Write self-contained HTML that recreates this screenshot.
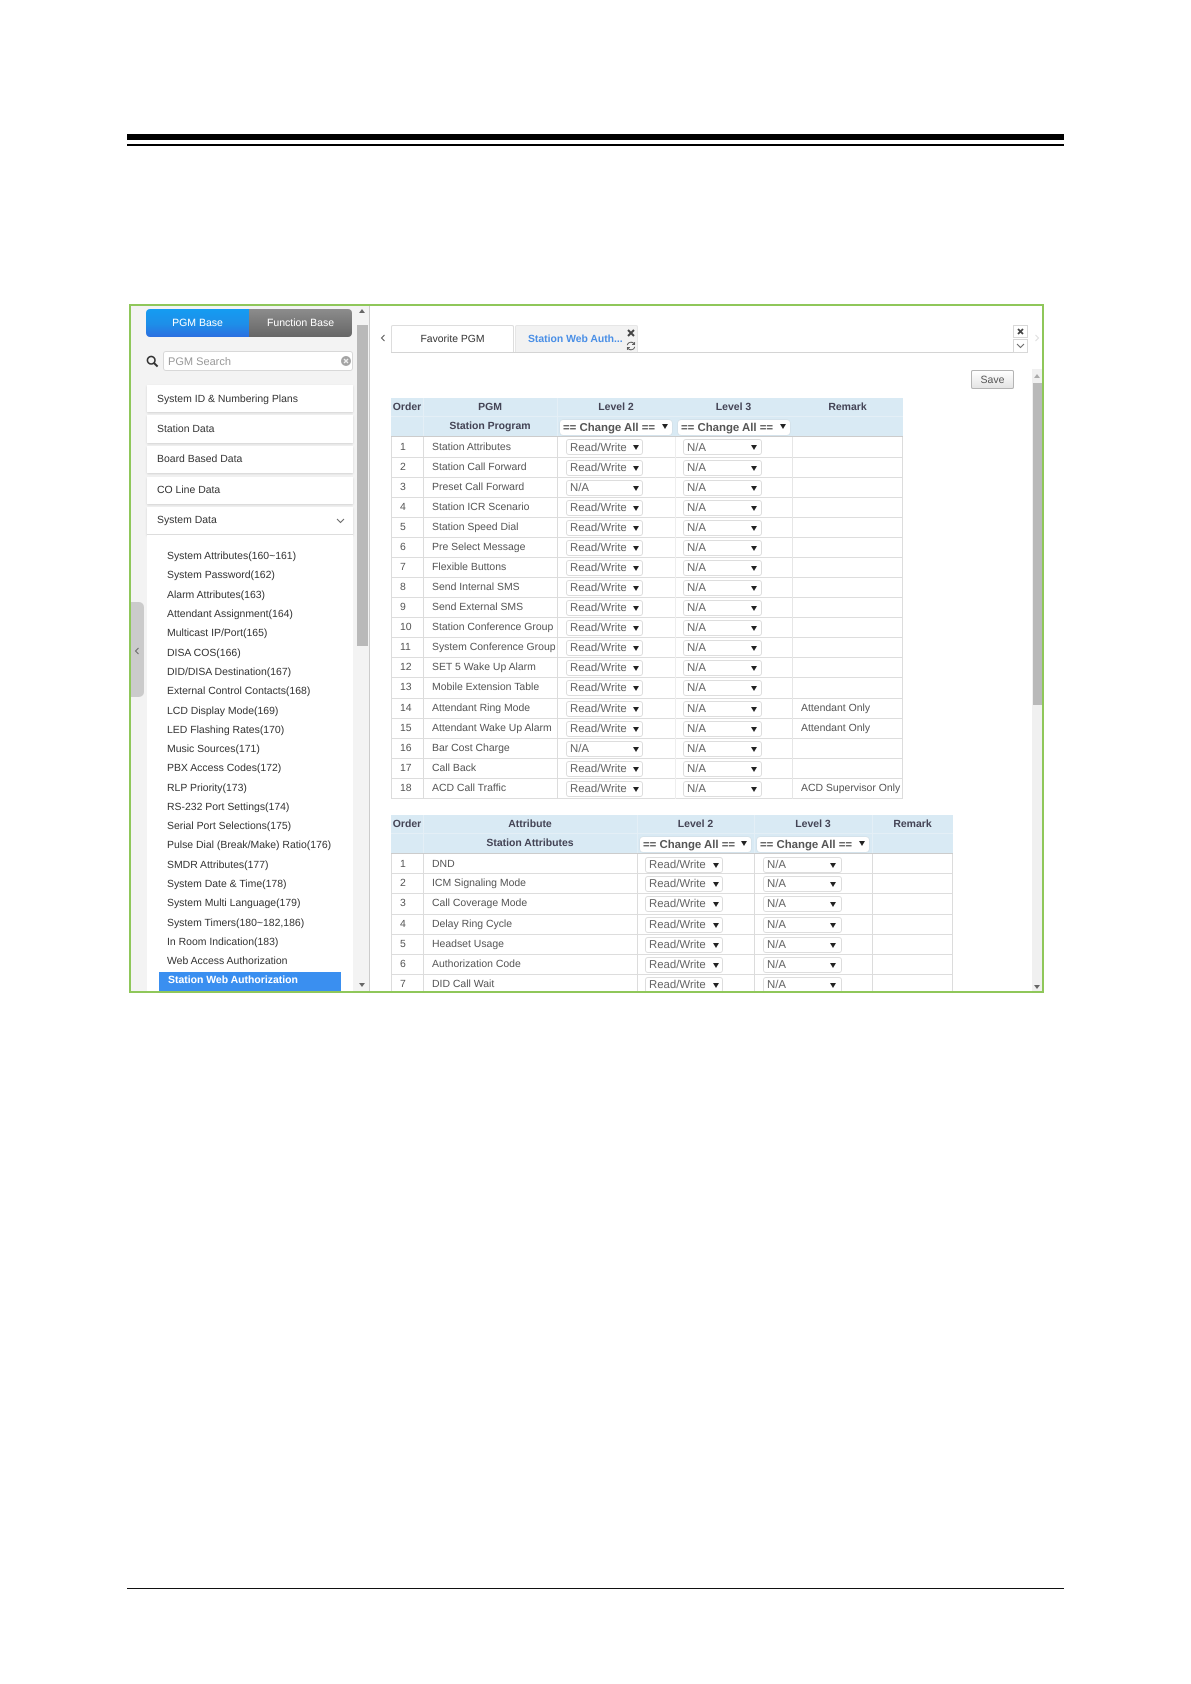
<!DOCTYPE html>
<html lang="en"><head><meta charset="utf-8"><title>Station Web Authorization</title>
<style>
html,body{margin:0;padding:0;background:#fff;width:1191px;height:1684px;overflow:hidden}
body{position:relative;font-family:"Liberation Sans",Arial,sans-serif;font-size:10.45px;color:#444;text-rendering:geometricPrecision}
div,span,i,b{position:absolute;display:block;font-style:normal;box-sizing:border-box;white-space:nowrap}
#clip{left:0;top:0;width:1191px;height:992px;overflow:hidden;filter:blur(.3px)}
.ac{left:147px;width:206px;background:#fff;box-shadow:0 1px 2px rgba(0,0,0,.14);color:#333;padding-left:10px}
.li{left:167px;color:#333;line-height:16px;height:16px;margin-top:1px}
.h{background:#d9eaf4}
.t{font-weight:bold;color:#445;text-align:center;line-height:16px;height:16px}
.v{width:1px;background:#dcdcdc}
.vh{width:1px;background:#e4eff6}
.r{height:21px;border-top:1px solid #ddd;left:391px}
.r1{width:512px}
.r2{width:562px}
.o{left:9px;top:0;line-height:19px;color:#555}
.n{left:41px;top:0;line-height:19px;color:#555}
.s{top:2px;height:16px;background:#fff;border:1px solid #ddd;border-radius:3px;color:#666;font-size:11.4px;line-height:15px;padding-left:3px}
.s::after{content:"";position:absolute;top:5px;border-left:3px solid transparent;border-right:3px solid transparent;border-top:5px solid #222}
.a{width:77px}.a::after{left:66px}
.b{width:79px}.b::after{left:67px}
.r2 .a{left:254px;width:78px}.r2 .a::after{left:67px}
.r2 .b{left:372px}.r2 .b::after{left:66px}
.r1 .a{left:175px}.r1 .b{left:292px}
.ca{height:15px;background:#fff;border-radius:3px;font-size:11.4px;font-weight:bold;color:#555;line-height:16px;padding-left:3px;box-shadow:0 0 1px #bbb}
.ca::after{content:"";position:absolute;right:4px;top:4px;border-left:3px solid transparent;border-right:3px solid transparent;border-top:5px solid #222}
.up,.dn{width:0;height:0;border-left:3.5px solid transparent;border-right:3.5px solid transparent}
.up{border-bottom:4px solid #666}
.dn{border-top:4px solid #666}
</style></head>
<body>
<div style="left:127px;top:134px;width:937px;height:6px;background:#000"></div>
<div style="left:127px;top:144px;width:937px;height:2px;background:#000"></div>
<div style="left:127px;top:1588px;width:937px;height:1px;background:#111"></div>

<div id="clip">
<!-- sidebar -->
<div style="left:130px;top:306px;width:240px;height:686px;background:#f3f3f3;border-right:1px solid #ccc"></div>
<div style="left:146px;top:309px;width:103px;height:28px;border-radius:4px 0 0 4px;background:linear-gradient(#149cf2,#1e8ee8 55%,#2c6fe0);color:#fff;text-align:center;line-height:28px;font-size:10.5px">PGM Base</div>
<div style="left:249px;top:309px;width:103px;height:28px;border-radius:0 4px 4px 0;background:linear-gradient(#8c8c8c,#666);color:#fff;text-align:center;line-height:28px;font-size:10.5px">Function Base</div>
<svg style="position:absolute;left:146px;top:355px" width="13" height="13" viewBox="0 0 13 13"><circle cx="5.2" cy="5.2" r="3.8" fill="none" stroke="#333" stroke-width="1.6"/><path d="M8 8l3.6 3.6" stroke="#333" stroke-width="2" fill="none"/></svg>
<div style="left:163px;top:351px;width:190px;height:20px;background:#fff;border:1px solid #d8d8d8;border-radius:3px;color:#999;font-size:11px;line-height:20px;padding-left:4px">PGM Search</div>
<svg style="position:absolute;left:341px;top:356px" width="10" height="10" viewBox="0 0 10 10"><circle cx="5" cy="5" r="5" fill="#a4a4a4"/><path d="M3 3l4 4M7 3l-4 4" stroke="#eee" stroke-width="1.4"/></svg>

<div class="ac" style="top:385px;height:27px;line-height:29px">System ID &amp; Numbering Plans</div>
<div class="ac" style="top:415px;height:28px;line-height:29px">Station Data</div>
<div class="ac" style="top:446px;height:27px;line-height:27px">Board Based Data</div>
<div class="ac" style="top:477px;height:27px;line-height:27px">CO Line Data</div>
<div class="ac" style="top:507px;height:28px;line-height:27px;border-bottom:1px solid #ddd">System Data</div>
<svg style="position:absolute;left:336px;top:518px" width="9" height="6" viewBox="0 0 9 6"><path d="M1 1l3.5 3.5L8 1" fill="none" stroke="#666" stroke-width="1"/></svg>
<div style="left:147px;top:535px;width:206px;height:460px;background:#fff"></div>

<div class="li" style="top:548px">System Attributes(160~161)</div>
<div class="li" style="top:567px">System Password(162)</div>
<div class="li" style="top:587px">Alarm Attributes(163)</div>
<div class="li" style="top:606px">Attendant Assignment(164)</div>
<div class="li" style="top:625px">Multicast IP/Port(165)</div>
<div class="li" style="top:645px">DISA COS(166)</div>
<div class="li" style="top:664px">DID/DISA Destination(167)</div>
<div class="li" style="top:683px">External Control Contacts(168)</div>
<div class="li" style="top:703px">LCD Display Mode(169)</div>
<div class="li" style="top:722px">LED Flashing Rates(170)</div>
<div class="li" style="top:741px">Music Sources(171)</div>
<div class="li" style="top:760px">PBX Access Codes(172)</div>
<div class="li" style="top:780px">RLP Priority(173)</div>
<div class="li" style="top:799px">RS-232 Port Settings(174)</div>
<div class="li" style="top:818px">Serial Port Selections(175)</div>
<div class="li" style="top:837px">Pulse Dial (Break/Make) Ratio(176)</div>
<div class="li" style="top:857px">SMDR Attributes(177)</div>
<div class="li" style="top:876px">System Date &amp; Time(178)</div>
<div class="li" style="top:895px">System Multi Language(179)</div>
<div class="li" style="top:915px">System Timers(180~182,186)</div>
<div class="li" style="top:934px">In Room Indication(183)</div>
<div class="li" style="top:953px">Web Access Authorization</div>
<div style="left:159px;top:972px;width:182px;height:21px;background:#3a8ff0;color:#fff;font-weight:bold;line-height:18px;padding-left:9px">Station Web Authorization</div>

<!-- sidebar scrollbar -->
<div style="left:357px;top:325px;width:11px;height:321px;background:#b9b9b9"></div>
<div class="up" style="left:359px;top:309px"></div>
<div class="dn" style="left:359px;top:983px"></div>
<!-- handle -->
<div style="left:131px;top:602px;width:13px;height:95px;background:#cbcbcb;border-radius:0 5px 5px 0"></div>
<svg style="position:absolute;left:134px;top:647px" width="6" height="8" viewBox="0 0 6 8"><path d="M4.5 1L1.5 4l3 3" fill="none" stroke="#666" stroke-width="1"/></svg>

<!-- tabs -->
<svg style="position:absolute;left:380px;top:334px" width="6" height="8" viewBox="0 0 6 8"><path d="M4.5 1L1.5 4l3 3" fill="none" stroke="#555" stroke-width="1"/></svg>
<div style="left:391px;top:325px;width:123px;height:28px;background:#fff;border:1px solid #ddd;border-bottom:0;border-radius:2px 2px 0 0;text-align:center;line-height:27px;color:#333;font-size:10.4px">Favorite PGM</div>
<div style="left:515px;top:325px;width:123px;height:28px;background:#f2f2f2;border:1px solid #e6e6e6;border-bottom:0;border-radius:2px 2px 0 0;color:#4a8fe6;font-weight:bold;font-size:10.4px;line-height:27px;padding-left:12px">Station Web Auth...</div>
<svg style="position:absolute;left:626px;top:328px" width="10" height="10" viewBox="0 0 10 10"><path d="M2 2l6 6M8 2l-6 6" stroke="#444" stroke-width="2"/></svg>
<svg style="position:absolute;left:626px;top:341px" width="10" height="10" viewBox="0 0 10 10"><path d="M1.3 4.2A3.8 3.8 0 0 1 8.2 3M8.7 5.8A3.8 3.8 0 0 1 1.8 7" fill="none" stroke="#555" stroke-width="1"/><path d="M8.6 1v2.6H6M1.4 9V6.4H4" fill="none" stroke="#555" stroke-width=".9"/></svg>
<div style="left:391px;top:352px;width:637px;height:1px;background:#d4d4d4"></div>
<div style="left:1013px;top:325px;width:15px;height:13px;border:1px solid #d8d8d8;background:#fff"></div>
<svg style="position:absolute;left:1016px;top:327px" width="9" height="9" viewBox="0 0 9 9"><path d="M2 2l5 5M7 2l-5 5" stroke="#444" stroke-width="1.8"/></svg>
<div style="left:1013px;top:339px;width:15px;height:14px;border:1px solid #d8d8d8;background:#fff"></div>
<svg style="position:absolute;left:1016px;top:343px" width="9" height="6" viewBox="0 0 9 6"><path d="M1 1l3.5 3.5L8 1" fill="none" stroke="#666" stroke-width="1"/></svg>
<svg style="position:absolute;left:1034px;top:334px" width="6" height="8" viewBox="0 0 6 8"><path d="M1.5 1l3 3-3 3" fill="none" stroke="#ddd" stroke-width="1"/></svg>

<!-- Save -->
<div style="left:971px;top:370px;width:43px;height:19px;border:1px solid #b4b4b4;border-radius:2px;background:linear-gradient(#fff,#e4e4e4);text-align:center;line-height:19px;color:#555;font-size:10.5px">Save</div>

<!-- main scrollbar -->
<div style="left:1032px;top:369px;width:10px;height:624px;background:#f0f0f0"></div>
<div style="left:1033px;top:383px;width:9px;height:322px;background:#b9b9b9"></div>
<div class="up" style="left:1034px;top:374px;border-bottom-color:#aaa"></div>
<div class="dn" style="left:1034px;top:985px"></div>

<!-- table 1 -->
<div class="h" style="left:391px;top:398px;width:512px;height:39px;border-bottom:1px solid #ccc"></div>
<div class="vh" style="left:423px;top:398px;height:38px"></div>
<div class="vh" style="left:557px;top:398px;height:38px"></div>
<div style="left:391px;top:416px;width:512px;height:1px;background:#e4eff6"></div>
<div class="t" style="left:391px;top:400px;width:32px">Order</div>
<div class="t" style="left:423px;top:400px;width:134px">PGM</div>
<div class="t" style="left:557px;top:400px;width:118px">Level 2</div>
<div class="t" style="left:675px;top:400px;width:117px">Level 3</div>
<div class="t" style="left:792px;top:400px;width:111px">Remark</div>
<div class="t" style="left:423px;top:419px;width:134px">Station Program</div>
<div class="ca" style="left:560px;top:420px;width:112px">== Change All ==</div>
<div class="ca" style="left:678px;top:420px;width:112px">== Change All ==</div>

<div class="r r1" style="top:436px;border-top-color:transparent"><span class="o" style="top:1px">1</span><span class="n" style="top:1px">Station Attributes</span><i class="s a" style="line-height:16px">Read/Write</i><i class="s b" style="line-height:16px">N/A</i></div>
<div class="r r1" style="top:457px"><span class="o">2</span><span class="n">Station Call Forward</span><i class="s a">Read/Write</i><i class="s b">N/A</i></div>
<div class="r r1" style="top:477px"><span class="o">3</span><span class="n">Preset Call Forward</span><i class="s a">N/A</i><i class="s b">N/A</i></div>
<div class="r r1" style="top:497px"><span class="o">4</span><span class="n">Station ICR Scenario</span><i class="s a">Read/Write</i><i class="s b">N/A</i></div>
<div class="r r1" style="top:517px"><span class="o">5</span><span class="n">Station Speed Dial</span><i class="s a">Read/Write</i><i class="s b">N/A</i></div>
<div class="r r1" style="top:537px"><span class="o">6</span><span class="n">Pre Select Message</span><i class="s a">Read/Write</i><i class="s b">N/A</i></div>
<div class="r r1" style="top:557px"><span class="o">7</span><span class="n">Flexible Buttons</span><i class="s a">Read/Write</i><i class="s b">N/A</i></div>
<div class="r r1" style="top:577px"><span class="o">8</span><span class="n">Send Internal SMS</span><i class="s a">Read/Write</i><i class="s b">N/A</i></div>
<div class="r r1" style="top:597px"><span class="o">9</span><span class="n">Send External SMS</span><i class="s a">Read/Write</i><i class="s b">N/A</i></div>
<div class="r r1" style="top:617px"><span class="o">10</span><span class="n">Station Conference Group</span><i class="s a">Read/Write</i><i class="s b">N/A</i></div>
<div class="r r1" style="top:637px"><span class="o">11</span><span class="n">System Conference Group</span><i class="s a">Read/Write</i><i class="s b">N/A</i></div>
<div class="r r1" style="top:657px"><span class="o">12</span><span class="n">SET 5 Wake Up Alarm</span><i class="s a">Read/Write</i><i class="s b">N/A</i></div>
<div class="r r1" style="top:677px"><span class="o">13</span><span class="n">Mobile Extension Table</span><i class="s a">Read/Write</i><i class="s b">N/A</i></div>
<div class="r r1" style="top:698px"><span class="o">14</span><span class="n">Attendant Ring Mode</span><i class="s a">Read/Write</i><i class="s b">N/A</i><span class="n" style="left:410px">Attendant Only</span></div>
<div class="r r1" style="top:718px"><span class="o">15</span><span class="n">Attendant Wake Up Alarm</span><i class="s a">Read/Write</i><i class="s b">N/A</i><span class="n" style="left:410px">Attendant Only</span></div>
<div class="r r1" style="top:738px"><span class="o">16</span><span class="n">Bar Cost Charge</span><i class="s a">N/A</i><i class="s b">N/A</i></div>
<div class="r r1" style="top:758px"><span class="o">17</span><span class="n">Call Back</span><i class="s a">Read/Write</i><i class="s b">N/A</i></div>
<div class="r r1" style="top:778px;height:21px;border-bottom:1px solid #ddd"><span class="o">18</span><span class="n">ACD Call Traffic</span><i class="s a">Read/Write</i><i class="s b">N/A</i><span class="n" style="left:410px">ACD Supervisor Only</span></div>
<div class="v" style="left:391px;top:437px;height:362px"></div>
<div class="v" style="left:423px;top:437px;height:362px"></div>
<div class="v" style="left:557px;top:437px;height:362px"></div>
<div class="v" style="left:675px;top:437px;height:362px;background:#eee"></div>
<div class="v" style="left:792px;top:437px;height:362px;background:#e6e6e6"></div>
<div class="v" style="left:902px;top:437px;height:362px"></div>

<!-- table 2 -->
<div class="h" style="left:391px;top:815px;width:562px;height:39px;border-bottom:1px solid #ccc"></div>
<div class="vh" style="left:423px;top:815px;height:38px"></div>
<div class="vh" style="left:637px;top:815px;height:38px"></div>
<div class="vh" style="left:754px;top:815px;height:38px"></div>
<div class="vh" style="left:872px;top:815px;height:38px"></div>
<div style="left:391px;top:833px;width:562px;height:1px;background:#e4eff6"></div>
<div class="t" style="left:391px;top:817px;width:32px">Order</div>
<div class="t" style="left:423px;top:817px;width:214px">Attribute</div>
<div class="t" style="left:637px;top:817px;width:117px">Level 2</div>
<div class="t" style="left:754px;top:817px;width:118px">Level 3</div>
<div class="t" style="left:872px;top:817px;width:81px">Remark</div>
<div class="t" style="left:423px;top:836px;width:214px">Station Attributes</div>
<div class="ca" style="left:640px;top:837px;width:111px">== Change All ==</div>
<div class="ca" style="left:757px;top:837px;width:112px">== Change All ==</div>

<div class="r r2" style="top:854px;border-top-color:transparent"><span class="o">1</span><span class="n">DND</span><i class="s a">Read/Write</i><i class="s b">N/A</i></div>
<div class="r r2" style="top:873px"><span class="o">2</span><span class="n">ICM Signaling Mode</span><i class="s a">Read/Write</i><i class="s b">N/A</i></div>
<div class="r r2" style="top:893px"><span class="o">3</span><span class="n">Call Coverage Mode</span><i class="s a">Read/Write</i><i class="s b">N/A</i></div>
<div class="r r2" style="top:914px"><span class="o">4</span><span class="n">Delay Ring Cycle</span><i class="s a">Read/Write</i><i class="s b">N/A</i></div>
<div class="r r2" style="top:934px"><span class="o">5</span><span class="n">Headset Usage</span><i class="s a">Read/Write</i><i class="s b">N/A</i></div>
<div class="r r2" style="top:954px"><span class="o">6</span><span class="n">Authorization Code</span><i class="s a">Read/Write</i><i class="s b">N/A</i></div>
<div class="r r2" style="top:974px"><span class="o">7</span><span class="n">DID Call Wait</span><i class="s a">Read/Write</i><i class="s b">N/A</i></div>
<div class="v" style="left:391px;top:854px;height:140px"></div>
<div class="v" style="left:423px;top:854px;height:140px"></div>
<div class="v" style="left:637px;top:854px;height:140px"></div>
<div class="v" style="left:754px;top:854px;height:140px"></div>
<div class="v" style="left:872px;top:854px;height:140px"></div>
<div class="v" style="left:952px;top:854px;height:140px"></div>
</div>

<!-- frame -->
<div style="left:129px;top:304px;width:915px;height:2px;background:#8fc75a"></div>
<div style="left:129px;top:991px;width:915px;height:2px;background:#8fc75a"></div>
<div style="left:129px;top:304px;width:2px;height:689px;background:#8fc75a"></div>
<div style="left:1042px;top:304px;width:2px;height:689px;background:#8fc75a"></div>
</body></html>
